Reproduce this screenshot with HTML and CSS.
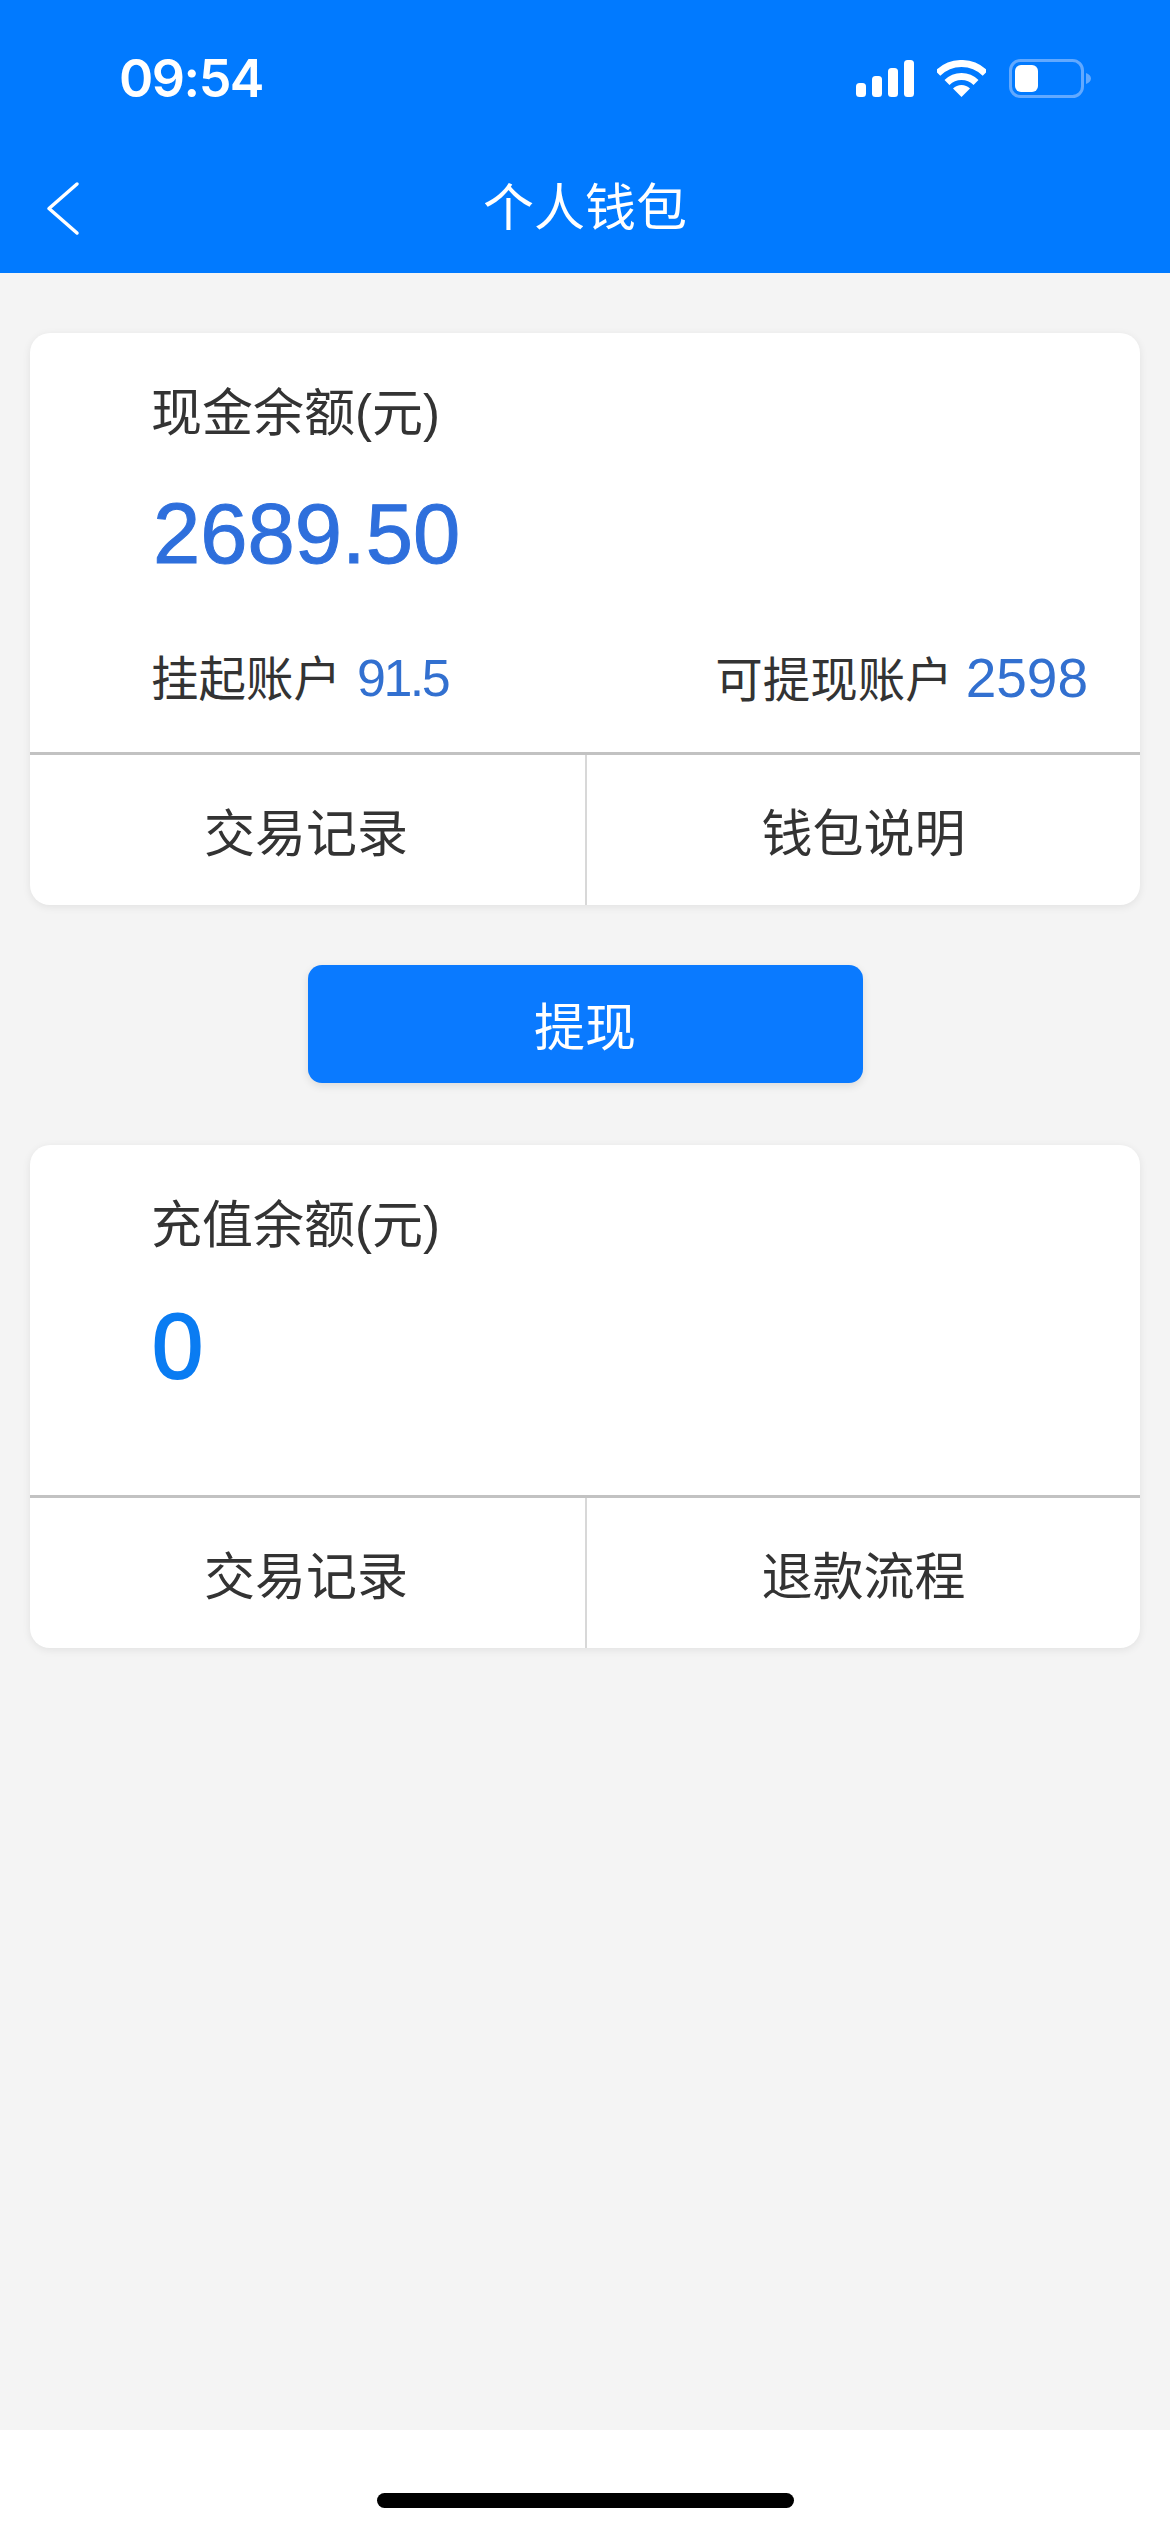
FILE: index.html
```html
<!DOCTYPE html>
<html lang="zh-CN">
<head>
    <meta charset="UTF-8">
    <meta name="viewport" content="width=device-width, initial-scale=1.0">
    <title>个人钱包</title>
    <link rel="stylesheet" href="styles.css">
</head>
<body>
    <div class="page">
        <header class="top">
            <div class="status-bar">
                <span class="time">09:54</span>
                <div class="status-icons">
                    <svg class="icon-signal" width="58" height="37" viewBox="0 0 58 37" fill="#fff">
                        <rect x="0" y="23" width="10" height="14" rx="3.500"/>
                        <rect x="16" y="16" width="10" height="21" rx="3.500"/>
                        <rect x="32" y="8" width="10" height="29" rx="3.500"/>
                        <rect x="48" y="0" width="10" height="37" rx="3.500"/>
                    </svg>
                    <svg class="icon-wifi" width="49" height="37" viewBox="0 0 49 37" fill="none" stroke="#fff">
                        <path d="M0.8 13.3A33.5 33.5 0 0 1 48.2 13.3" stroke-width="7"/>
                        <path d="M10 22.5A20.5 20.5 0 0 1 39 22.5" stroke-width="7"/>
                        <path d="M24.5 37L16 28.5A12 12 0 0 1 33 28.5Z" fill="#fff" stroke="none"/>
                    </svg>
                    <svg class="icon-battery" width="82" height="39" viewBox="0 0 82 39">
                        <rect x="1.5" y="1.5" width="72" height="36" rx="10" fill="none" stroke="#62a9ff" stroke-width="3"/>
                        <rect x="6" y="6" width="23" height="27" rx="6" fill="#fff"/>
                        <path d="M77 14C80 15 82 17 82 19.5C82 22 80 24 77 25Z" fill="#62a9ff"/>
                    </svg>
                </div>
            </div>
            <nav class="nav-bar">
                <svg class="back" width="36" height="56" viewBox="0 0 36 56" fill="none" stroke="#fff" stroke-width="3.500" stroke-linecap="round" stroke-linejoin="round">
                    <path d="M31 3L3 27.500L31 52"/>
                </svg>
                <h1 class="nav-title">个人钱包</h1>
            </nav>
        </header>

        <main class="content">
            <section class="card">
                <div class="card-main">
                    <div class="card-label">现金余额(元)</div>
                    <div class="amount amount-cash">2689.50</div>
                    <div class="sub-row">
                        <div class="sub-item">挂起账户<span class="sub-value sub-value-small">91.5</span></div>
                        <div class="sub-item">可提现账户<span class="sub-value">2598</span></div>
                    </div>
                </div>
                <div class="card-links">
                    <div class="card-link">交易记录</div>
                    <div class="card-link">钱包说明</div>
                </div>
            </section>

            <button class="withdraw">提现</button>

            <section class="card">
                <div class="card-main card-main-recharge">
                    <div class="card-label">充值余额(元)</div>
                    <div class="amount amount-recharge">0</div>
                </div>
                <div class="card-links">
                    <div class="card-link">交易记录</div>
                    <div class="card-link">退款流程</div>
                </div>
            </section>
        </main>

        <footer class="home-area">
            <div class="home-bar"></div>
        </footer>
    </div>
</body>
</html>
```

FILE: styles.css
```css
* {
    box-sizing: border-box;
}
body {
    margin: 0;
    background: #f4f4f4;
    font-family: "Liberation Sans", "Noto Sans CJK SC", sans-serif;
    color: #333;
}
.page {
    display: flex;
    flex-direction: column;
    min-height: 2532px;
}

.top {
    height: 273px;
    background: #017aff;
    color: #fff;
}
.status-bar {
    display: flex;
    justify-content: space-between;
    align-items: center;
    height: 156px;
    padding: 0 79px 0 119px;
}
.time {
    font-family: Inter, "Liberation Sans", sans-serif;
    font-size: 52px;
    font-weight: 600;
    letter-spacing: -1.500px;
}
.status-icons {
    display: flex;
    align-items: center;
    gap: 23px;
}
.nav-bar {
    display: flex;
    justify-content: center;
    align-items: center;
    position: relative;
    height: 117px;
    padding-bottom: 12px;
}
.back {
    position: absolute;
    left: 46px;
    top: 25px;
}
.nav-title {
    margin: 0;
    font-size: 51px;
    font-weight: 400;
    line-height: 60px;
}

.content {
    flex: 1;
    padding: 60px 30px 0;
}
.card {
    background: #fff;
    border-radius: 20px;
    box-shadow: 0 2px 8px rgba(0,0,0,0.08);
    overflow: hidden;
}
.card-main {
    padding: 51px 52px 44px 121px;
    border-bottom: 3px solid #c2c2c2;
}
.card-main-recharge {
    padding-top: 51px;
    padding-bottom: 99px;
}
.card-label {
    font-size: 51px;
    line-height: 60px;
}
.amount {
    line-height: 100px;
}
.amount-cash {
    margin-top: 40px;
    padding-left: 2px;
    font-size: 85px;
    color: #2e6fdc;
    -webkit-text-stroke: 1px #2e6fdc;
}
.amount-recharge {
    margin-top: 40px;
    padding-left: 1px;
    font-size: 92px;
    color: #0a7cf2;
    -webkit-text-stroke: 2px #0a7cf2;
}
.sub-row {
    display: flex;
    justify-content: space-between;
    height: 60px;
    margin-top: 64px;
}
.sub-item {
    display: flex;
    align-items: baseline;
    font-size: 47.500px;
    line-height: 60px;
}
.sub-value {
    margin-left: 13px;
    font-size: 55px;
    color: #3270d0;
}
.sub-value-small {
    margin-left: 16px;
    font-size: 52px;
    letter-spacing: -2.500px;
}
.card-links {
    display: grid;
    grid-template-columns: 1fr 1fr;
    height: 150px;
}
.card-link {
    display: flex;
    justify-content: center;
    align-items: center;
    padding-right: 3px;
    font-size: 51px;
}
.card-link + .card-link {
    padding-right: 0;
    border-left: 2px solid #d8d8d8;
}

.withdraw {
    display: block;
    width: 555px;
    height: 118px;
    margin: 60px auto 62px;
    padding: 0;
    border: none;
    border-radius: 14px;
    background: #0a7aff;
    box-shadow: 0 3px 8px rgba(0,0,0,0.1);
    color: #fff;
    font-family: inherit;
    font-size: 51px;
}

.home-area {
    display: flex;
    justify-content: center;
    height: 102px;
    padding-top: 63px;
    background: #fff;
}
.home-bar {
    width: 417px;
    height: 15px;
    border-radius: 8px;
    background: #000;
}
```
